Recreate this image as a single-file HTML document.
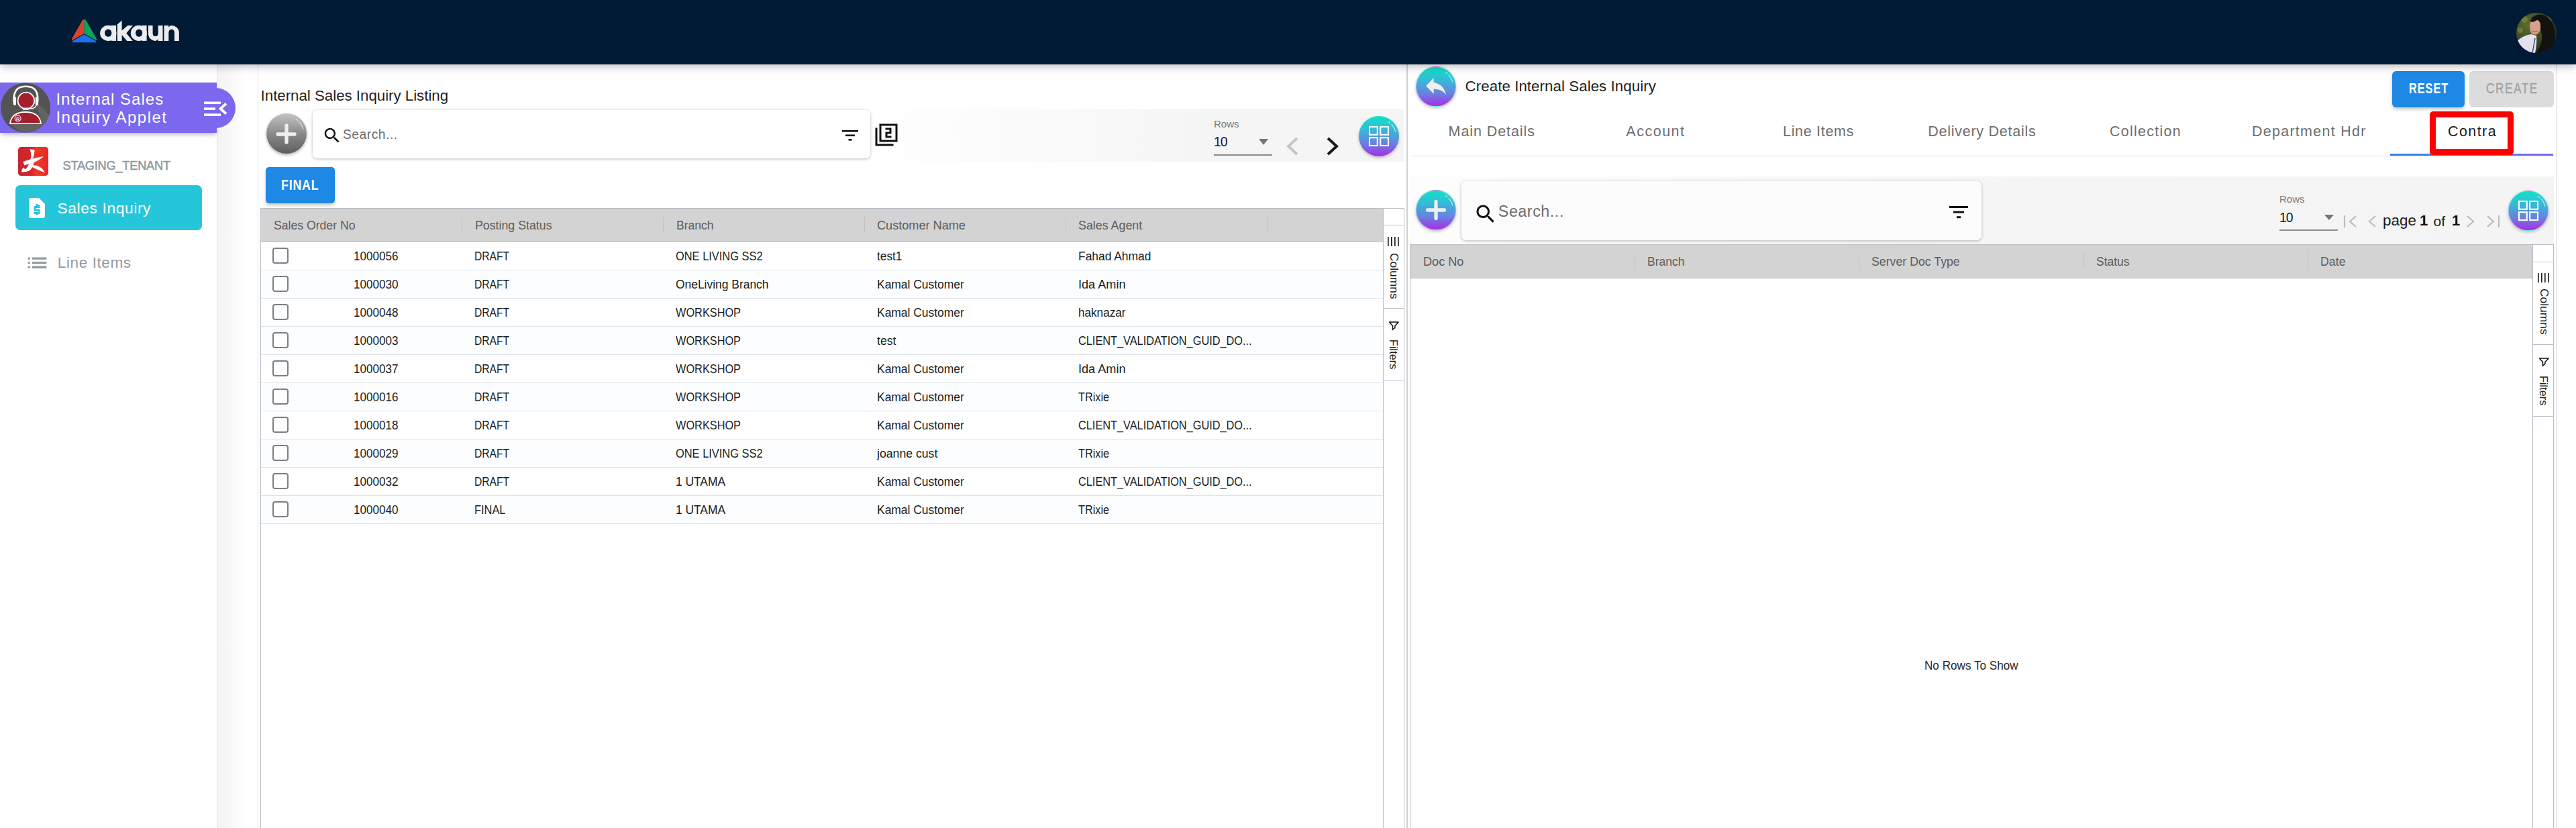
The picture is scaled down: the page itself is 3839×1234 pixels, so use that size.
<!DOCTYPE html>
<html><head><meta charset="utf-8">
<style>
*{box-sizing:border-box;margin:0;padding:0}
html,body{width:3839px;height:1234px;overflow:hidden;background:#fff;font-family:"Liberation Sans",sans-serif;position:relative}
.a{position:absolute}
.t{position:absolute;white-space:nowrap;line-height:1}
svg{position:absolute;overflow:visible}
</style></head><body>
<div class="a" style="left:0px;top:0px;width:3839px;height:96px;background:#011a36;z-index:5;box-shadow:0 2px 13px rgba(0,0,0,.3)"></div>
<svg style="left:104px;top:27px;z-index:6" width="42" height="38" viewBox="0 0 42 38">
<path d="M21.5 2.2 Q20 1.5 19 3 L3.2 30.5 Q2 33 4.2 32.8 L21.5 23 Z" fill="#d9432c"/>
<path d="M21.5 2.2 Q23 1.5 24 3 L39.8 30.5 Q41 33 38.8 32.8 L21.5 23 Z" fill="#0aa55c"/>
<path d="M21.5 24.2 L4.2 34 Q2.5 36.3 5.5 36.3 L37.5 36.3 Q40.5 36.3 38.8 34 Z" fill="#1a73e8"/>
</svg>
<svg style="left:0;top:0;z-index:6" width="300" height="96" viewBox="0 0 300 96">
<g fill="#ececec">
<ellipse cx="161.3" cy="49.4" rx="12.2" ry="11.6"/><rect x="165.9" y="37.9" width="7.1" height="23"/>
<path d="M174.8 60.9 V36.4 L181.3 30.8 H181.6 V45.5 L190.4 37.9 H197.9 L188.2 49.6 L197.7 60.9 H189.3 L181.6 52 V60.9 Z"/>
<ellipse cx="206.8" cy="49.4" rx="12" ry="11.6"/><rect x="211.5" y="37.9" width="7.1" height="23"/>
<path d="M221 37.9 H227.6 V50.2 A4.1 4.6 0 0 0 235.7 50.2 V37.9 H242.5 V60.9 H235.7 V58.2 Q233 60.9 231.7 60.9 A10.7 10.7 0 0 1 221 50.2 Z"/>
<path d="M244.5 60.9 V37.9 H251.3 V40.5 Q253 37.9 255.6 37.9 A11.1 10.6 0 0 1 266.8 48.5 V60.9 H260 V48.5 A4.3 4.8 0 0 0 251.3 48.5 V60.9 Z"/>
</g>
<g fill="#011a36">
<ellipse cx="161.2" cy="49.2" rx="5.2" ry="5.6"/>
<ellipse cx="207.1" cy="49.2" rx="5.1" ry="5.6"/>
</g>
</svg>
<svg style="left:3750px;top:19px;z-index:6" width="60" height="60" viewBox="0 0 60 60">
<defs><clipPath id="av"><circle cx="30" cy="30" r="30"/></clipPath>
<radialGradient id="fol" cx=".3" cy=".3" r=".7"><stop offset="0" stop-color="#5d6d32"/><stop offset=".6" stop-color="#3e4c22"/><stop offset="1" stop-color="#273219"/></radialGradient></defs>
<g clip-path="url(#av)">
<rect width="60" height="60" fill="url(#fol)"/>
<circle cx="12" cy="10" r="5" fill="#7d8c45" opacity=".7"/><circle cx="6" cy="26" r="4" fill="#7d8c45" opacity=".6"/><circle cx="50" cy="8" r="4" fill="#6f8a3c" opacity=".7"/>
<path d="M22 8 Q34 -2 46 6 Q58 16 58 36 Q58 52 50 60 H30 Q40 44 38 32 Q36 18 28 16 Z" fill="#141210"/>
<path d="M20 20 Q20 11 28 10 Q35 10 36 18 Q37 28 31 32 Q24 34 21 28 Z" fill="#d6a08a"/>
<path d="M24 27 Q28 30 32 27" stroke="#b05a5a" stroke-width="1.4" fill="none"/>
<path d="M20 12 Q26 6 34 9 Q30 12 24 14 Z" fill="#141210"/>
<path d="M0 44 Q8 34 22 32 L30 34 Q31 48 28 60 H0 Z" fill="#e6e0ee"/>
<path d="M24 60 L28 38" stroke="#3d4690" stroke-width="1.4"/>
</g></svg>
<div class="a" style="left:0px;top:96px;width:324px;height:1138px;background:#fff;border-right:1px solid #e2e2e2"></div>
<div class="a" style="left:324px;top:96px;width:60px;height:1138px;background:linear-gradient(90deg,#f3f3f3 0,#f8f8f8 20px,#fff 40px)"></div>
<div class="a" style="left:0px;top:123px;width:323px;height:75px;background:#7b68ee;box-shadow:0 5px 6px -2px rgba(0,0,0,.25)"></div>
<div class="a" style="left:291px;top:131px;width:60px;height:60px;border-radius:50%;background:#7b68ee"></div>
<svg style="left:1px;top:123px" width="75" height="75" viewBox="0 0 75 75">
<defs><clipPath id="sa"><circle cx="37" cy="37.5" r="37"/></clipPath></defs>
<g clip-path="url(#sa)">
<rect width="75" height="75" fill="#535353"/>
<path d="M52 28 L80 56 L80 80 L40 80 L14 62 L62 62 Z" fill="#626262"/>
</g>
<path d="M20.5 33 Q16 5.5 37.5 5.8 Q59 5.5 54.5 33" fill="none" stroke="#fff" stroke-width="2.6"/>
<rect x="18.8" y="21" width="4.2" height="13" rx="2" fill="#fff"/>
<rect x="51.8" y="21" width="4.2" height="13" rx="2" fill="#fff"/>
<circle cx="37.9" cy="27" r="13.2" fill="#fff"/><circle cx="37.9" cy="27" r="11.4" fill="#a51e2b"/>
<path d="M53.5 32 Q53 39.5 42 39.2" fill="none" stroke="#fff" stroke-width="1.6"/>
<rect x="32.8" y="37.6" width="9.7" height="3.2" rx="1.5" fill="#fff"/>
<path d="M13 62 Q15 43 37 43 Q59 43 61 62 Z" fill="#fff"/>
<path d="M15 60.5 Q17.5 45 37 45 Q56.5 45 59 60.5 Z" fill="#a51e2b"/>
<circle cx="25.6" cy="53.5" r="5" fill="#fff"/><circle cx="25.6" cy="53.5" r="3.9" fill="#a51e2b"/>
<text x="25.6" y="56.5" font-size="7.5" font-weight="bold" fill="#fff" text-anchor="middle" font-family="Liberation Sans">R</text>
</svg>
<div class="t" style="left:83.4px;top:135.8px;font-size:24px;color:#fff;letter-spacing:1.00px;">Internal Sales</div>
<div class="t" style="left:83.4px;top:162.8px;font-size:24px;color:#fff;letter-spacing:1.47px;">Inquiry Applet</div>
<svg style="left:304px;top:151px" width="34" height="23" viewBox="0 0 34 23">
<rect x="0" y="0.5" width="25" height="3.6" fill="#fff"/><rect x="0" y="9.3" width="17" height="3.6" fill="#fff"/><rect x="0" y="18.3" width="25" height="3.6" fill="#fff"/>
<path d="M33 3.5 L24.5 11 L33 18.5" stroke="#fff" stroke-width="3.8" fill="none"/>
</svg>
<svg style="left:27px;top:218.7px" width="45" height="43" viewBox="0 0 45 43">
<defs><linearGradient id="rl" x1="0" x2="1" y1="0" y2="0"><stop offset="0" stop-color="#c5272e"/><stop offset=".45" stop-color="#d8242a"/><stop offset=".6" stop-color="#ee3b24"/><stop offset="1" stop-color="#e8262a"/></linearGradient></defs>
<rect width="45" height="43" rx="4.5" fill="url(#rl)"/>
<g fill="#fff">
<path d="M17.3 3.6 Q22.5 2.8 24.8 5.6 Q23.6 10 23 15.5 L19.3 16.5 Q20 9.5 17.3 3.6 Z"/>
<path d="M7.6 22 Q20 17.2 38 14 Q31.5 20 23.5 23 Q14.5 25.5 9.3 27.6 Z"/>
<path d="M19.3 15 L25 19 Q22.5 29.5 18.3 34.3 Q13.5 38 5 37.3 Q5.3 32.8 7.6 30.6 Q9 33.2 11.3 32.7 Q16.2 28.8 19.3 15 Z"/>
<path d="M20.8 27.2 Q34.5 26.5 39.8 38.2 Q30 34.5 20.8 30 Z"/>
</g></svg>
<div class="t" style="left:93.5px;top:237.7px;font-size:18.2px;color:#8f9aa1;-webkit-text-stroke:.5px #8f9aa1;letter-spacing:-0.22px;">STAGING_TENANT</div>
<div class="a" style="left:23px;top:276px;width:278px;height:67px;border-radius:7px;background:#26c6da"></div>
<svg style="left:37px;top:292px" width="36" height="36" viewBox="0 0 24 24"><path fill="#fff" d="M14 2H6c-1.1 0-1.99.9-1.99 2L4 20c0 1.1.89 2 1.99 2H18c1.1 0 2-.9 2-2V8l-6-6zm1 10h-4v1h3c.55 0 1 .45 1 1v3c0 .55-.45 1-1 1h-1v1h-2v-1H9v-2h4v-1h-3c-.55 0-1-.45-1-1v-3c0-.55.45-1 1-1h1V8h2v1h2v2z"/></svg>
<div class="t" style="left:85.5px;top:298.9px;font-size:22.8px;color:#fff;letter-spacing:0.60px;">Sales Inquiry</div>
<svg style="left:37px;top:372px" width="37" height="39.4" viewBox="0 0 24 24" preserveAspectRatio="none"><path fill="#8f9aa1" d="M3 13h2v-2H3v2zm0 4h2v-2H3v2zm0-8h2V7H3v2zm4 4h14v-2H7v2zm0 4h14v-2H7v2zM7 7v2h14V7H7z"/></svg>
<div class="t" style="left:85.8px;top:380.6px;font-size:22.6px;color:#8f9aa1;letter-spacing:0.57px;">Line Items</div>
<div class="a" style="left:384px;top:96px;width:1px;height:1138px;background:#e3e3e3"></div>
<div class="t" style="left:388.6px;top:132.0px;font-size:22.3px;color:#1f1f1f;letter-spacing:-0.02px;">Internal Sales Inquiry Listing</div>
<div class="a" style="left:1300px;top:162px;width:793px;height:79px;background:linear-gradient(90deg,rgba(245,245,245,0) 0,#f5f5f5 500px,#f5f5f5 100%)"></div>
<div class="a" style="left:397px;top:169px;width:60px;height:60px;border-radius:50%;background:linear-gradient(180deg,#c4c4c4 0,#8a8a8a 50%,#5e5e5e 100%);box-shadow:0 2px 4px rgba(0,0,0,.3)"></div>
<svg style="left:411px;top:183.5px" width="32" height="32" viewBox="0 0 32 32"><path d="M16 3 V28 M3 16 H28" stroke="#eeeeee" stroke-width="5.3" stroke-linecap="round"/></svg>
<div class="a" style="left:466px;top:164px;width:831px;height:72px;border-radius:7px;background:#fff;box-shadow:0 1px 4px rgba(0,0,0,.28)"></div>
<svg style="left:480px;top:186.6px" width="30" height="30" viewBox="0 0 24 24"><path fill="#111" d="M15.5 14h-.79l-.28-.27C15.41 12.59 16 11.11 16 9.5 16 5.91 13.09 3 9.5 3S3 5.91 3 9.5 5.91 16 9.5 16c1.61 0 3.09-.59 4.23-1.57l.27.28v.79l5 4.99L20.49 19l-4.99-5zm-6 0C7.01 14 5 11.99 5 9.5S7.01 5 9.5 5 14 7.01 14 9.5 11.99 14 9.5 14z"/></svg>
<div class="t" style="left:510.9px;top:190.5px;font-size:19.3px;color:#6e6e6e;letter-spacing:0.51px;">Search...</div>
<svg style="left:1255px;top:194px" width="24" height="16" viewBox="0 0 24 16"><rect x="0" y="0" width="24" height="2.6" fill="#111"/><rect x="5" y="6.5" width="14" height="2.6" fill="#111"/><rect x="9.5" y="13" width="5" height="2.6" fill="#111"/></svg>
<svg style="left:1303px;top:183px" width="36" height="36" viewBox="0 0 24 24"><path fill="#111" d="M3 5H1v18h18v-2H3V5zm20-4H5v18h18V1zm-2 16H7V3h14v14zm-4-4h-4v-2h4V5h-6v2h4v2h-4v6h6v-2z"/></svg>
<div class="t" style="left:1809.0px;top:176.9px;font-size:15px;color:#7a7a7a;">Rows</div>
<div class="t" style="left:1809.0px;top:201.9px;font-size:19.5px;color:#1a1a1a;letter-spacing:-1px">10</div>
<div class="a" style="left:1809px;top:230px;width:87px;height:2px;background:#8c8c8c"></div>
<svg style="left:1876px;top:207px" width="14" height="9" viewBox="0 0 14 9"><path d="M0 0 H14 L7 9 Z" fill="#757575"/></svg>
<svg style="left:1914px;top:204px" width="22" height="28" viewBox="0 0 22 28"><path d="M19 2 L6 14 L19 26" stroke="#c6c6c6" stroke-width="4" fill="none"/></svg>
<svg style="left:1976px;top:204px" width="22" height="28" viewBox="0 0 22 28"><path d="M3 2 L16 14 L3 26" stroke="#1a1a1a" stroke-width="4" fill="none"/></svg>
<div class="a" style="left:2025px;top:173px;width:60px;height:60px;border-radius:50%;background:linear-gradient(180deg,#0fe3c8 0%,#3bb3d8 38%,#6a80e0 68%,#a82de6 100%);box-shadow:0 2px 4px rgba(0,0,0,.25)"></div>
<svg style="left:2040px;top:188px" width="30" height="30" viewBox="0 0 30 30"><g fill="none" stroke="#fff" stroke-width="2.1"><rect x="1" y="1" width="11.8" height="11.8"/><rect x="17.2" y="1" width="11.8" height="11.8"/><rect x="1" y="17.2" width="11.8" height="11.8"/><rect x="17.2" y="17.2" width="11.8" height="11.8"/></g></svg>
<div class="a" style="left:396px;top:249px;width:103px;height:54px;border-radius:5px;background:#1e88e5;box-shadow:0 3px 5px rgba(0,0,0,.22)"></div>
<div class="t" style="left:419.4px;top:266.2px;font-size:21.5px;color:#fff;letter-spacing:1.0px;transform-origin:0 0;transform:scaleX(0.8259);font-weight:bold;">FINAL</div>
<div class="a" style="left:388px;top:310px;width:1705px;height:924px;border:1px solid #babfc7;border-bottom:none"></div>
<div class="a" style="left:389px;top:311px;width:1672px;height:50px;background:#d3d3d3;border-bottom:1px solid #babfc7"></div>
<div class="t" style="left:407.6px;top:326.9px;font-size:18.4px;color:#5c5c5c;letter-spacing:0.0px;transform-origin:0 0;transform:scaleX(0.9584);">Sales Order No</div>
<div class="t" style="left:707.5px;top:326.9px;font-size:18.4px;color:#5c5c5c;letter-spacing:0.0px;transform-origin:0 0;transform:scaleX(0.9656);">Posting Status</div>
<div class="t" style="left:1007.5px;top:326.9px;font-size:18.4px;color:#5c5c5c;letter-spacing:0.0px;transform-origin:0 0;transform:scaleX(0.9532);">Branch</div>
<div class="t" style="left:1307.0px;top:326.9px;font-size:18.4px;color:#5c5c5c;letter-spacing:0.0px;transform-origin:0 0;transform:scaleX(0.9854);">Customer Name</div>
<div class="t" style="left:1607.0px;top:326.9px;font-size:18.4px;color:#5c5c5c;letter-spacing:0.0px;transform-origin:0 0;transform:scaleX(0.9699);">Sales Agent</div>
<div class="a" style="left:688px;top:323px;width:1px;height:24px;background:#c2c2c2"></div>
<div class="a" style="left:988px;top:323px;width:1px;height:24px;background:#c2c2c2"></div>
<div class="a" style="left:1288px;top:323px;width:1px;height:24px;background:#c2c2c2"></div>
<div class="a" style="left:1588px;top:323px;width:1px;height:24px;background:#c2c2c2"></div>
<div class="a" style="left:1888px;top:323px;width:1px;height:24px;background:#c2c2c2"></div>
<div class="a" style="left:389px;top:361px;width:1672px;height:42px;background:#fff;border-bottom:1px solid #dde2eb"></div>
<div class="a" style="left:406px;top:369px;width:24px;height:24px;border:2px solid #7a8086;border-radius:4px;background:#fff"></div>
<div class="t" style="left:527.0px;top:373.3px;font-size:18px;color:#181d1f;letter-spacing:0.0px;transform-origin:0 0;transform:scaleX(0.9485);">1000056</div>
<div class="t" style="left:707.2px;top:373.3px;font-size:18px;color:#181d1f;letter-spacing:0.0px;transform-origin:0 0;transform:scaleX(0.8696);">DRAFT</div>
<div class="t" style="left:1006.7px;top:373.3px;font-size:18px;color:#181d1f;letter-spacing:0.0px;transform-origin:0 0;transform:scaleX(0.9118);">ONE LIVING SS2</div>
<div class="t" style="left:1307.0px;top:373.3px;font-size:18px;color:#181d1f;letter-spacing:0.0px;transform-origin:0 0;transform:scaleX(0.9601);">test1</div>
<div class="t" style="left:1607.0px;top:373.3px;font-size:18px;color:#181d1f;letter-spacing:0.0px;transform-origin:0 0;transform:scaleX(0.9674);">Fahad Ahmad</div>
<div class="a" style="left:389px;top:403px;width:1672px;height:42px;background:#fcfdfe;border-bottom:1px solid #dde2eb"></div>
<div class="a" style="left:406px;top:411px;width:24px;height:24px;border:2px solid #7a8086;border-radius:4px;background:#fff"></div>
<div class="t" style="left:527.0px;top:415.3px;font-size:18px;color:#181d1f;letter-spacing:0.0px;transform-origin:0 0;transform:scaleX(0.9485);">1000030</div>
<div class="t" style="left:707.2px;top:415.3px;font-size:18px;color:#181d1f;letter-spacing:0.0px;transform-origin:0 0;transform:scaleX(0.8696);">DRAFT</div>
<div class="t" style="left:1006.7px;top:415.3px;font-size:18px;color:#181d1f;letter-spacing:0.0px;transform-origin:0 0;transform:scaleX(0.9679);">OneLiving Branch</div>
<div class="t" style="left:1307.0px;top:415.3px;font-size:18px;color:#181d1f;letter-spacing:0.0px;transform-origin:0 0;transform:scaleX(0.9686);">Kamal Customer</div>
<div class="t" style="left:1607.0px;top:415.3px;font-size:18px;color:#181d1f;letter-spacing:0.0px;transform-origin:0 0;transform:scaleX(1.0069);">Ida Amin</div>
<div class="a" style="left:389px;top:445px;width:1672px;height:42px;background:#fff;border-bottom:1px solid #dde2eb"></div>
<div class="a" style="left:406px;top:453px;width:24px;height:24px;border:2px solid #7a8086;border-radius:4px;background:#fff"></div>
<div class="t" style="left:527.0px;top:457.3px;font-size:18px;color:#181d1f;letter-spacing:0.0px;transform-origin:0 0;transform:scaleX(0.9485);">1000048</div>
<div class="t" style="left:707.2px;top:457.3px;font-size:18px;color:#181d1f;letter-spacing:0.0px;transform-origin:0 0;transform:scaleX(0.8696);">DRAFT</div>
<div class="t" style="left:1006.7px;top:457.3px;font-size:18px;color:#181d1f;letter-spacing:0.0px;transform-origin:0 0;transform:scaleX(0.9065);">WORKSHOP</div>
<div class="t" style="left:1307.0px;top:457.3px;font-size:18px;color:#181d1f;letter-spacing:0.0px;transform-origin:0 0;transform:scaleX(0.9686);">Kamal Customer</div>
<div class="t" style="left:1607.0px;top:457.3px;font-size:18px;color:#181d1f;letter-spacing:0.0px;transform-origin:0 0;transform:scaleX(0.9518);">haknazar</div>
<div class="a" style="left:389px;top:487px;width:1672px;height:42px;background:#fcfdfe;border-bottom:1px solid #dde2eb"></div>
<div class="a" style="left:406px;top:495px;width:24px;height:24px;border:2px solid #7a8086;border-radius:4px;background:#fff"></div>
<div class="t" style="left:527.0px;top:499.3px;font-size:18px;color:#181d1f;letter-spacing:0.0px;transform-origin:0 0;transform:scaleX(0.9485);">1000003</div>
<div class="t" style="left:707.2px;top:499.3px;font-size:18px;color:#181d1f;letter-spacing:0.0px;transform-origin:0 0;transform:scaleX(0.8696);">DRAFT</div>
<div class="t" style="left:1006.7px;top:499.3px;font-size:18px;color:#181d1f;letter-spacing:0.0px;transform-origin:0 0;transform:scaleX(0.9065);">WORKSHOP</div>
<div class="t" style="left:1307.0px;top:499.3px;font-size:18px;color:#181d1f;letter-spacing:0.0px;transform-origin:0 0;transform:scaleX(0.9834);">test</div>
<div class="t" style="left:1607.0px;top:499.3px;font-size:18px;color:#181d1f;letter-spacing:0.0px;transform-origin:0 0;transform:scaleX(0.9061);">CLIENT_VALIDATION_GUID_DO...</div>
<div class="a" style="left:389px;top:529px;width:1672px;height:42px;background:#fff;border-bottom:1px solid #dde2eb"></div>
<div class="a" style="left:406px;top:537px;width:24px;height:24px;border:2px solid #7a8086;border-radius:4px;background:#fff"></div>
<div class="t" style="left:527.0px;top:541.3px;font-size:18px;color:#181d1f;letter-spacing:0.0px;transform-origin:0 0;transform:scaleX(0.9485);">1000037</div>
<div class="t" style="left:707.2px;top:541.3px;font-size:18px;color:#181d1f;letter-spacing:0.0px;transform-origin:0 0;transform:scaleX(0.8696);">DRAFT</div>
<div class="t" style="left:1006.7px;top:541.3px;font-size:18px;color:#181d1f;letter-spacing:0.0px;transform-origin:0 0;transform:scaleX(0.9065);">WORKSHOP</div>
<div class="t" style="left:1307.0px;top:541.3px;font-size:18px;color:#181d1f;letter-spacing:0.0px;transform-origin:0 0;transform:scaleX(0.9686);">Kamal Customer</div>
<div class="t" style="left:1607.0px;top:541.3px;font-size:18px;color:#181d1f;letter-spacing:0.0px;transform-origin:0 0;transform:scaleX(1.0069);">Ida Amin</div>
<div class="a" style="left:389px;top:571px;width:1672px;height:42px;background:#fcfdfe;border-bottom:1px solid #dde2eb"></div>
<div class="a" style="left:406px;top:579px;width:24px;height:24px;border:2px solid #7a8086;border-radius:4px;background:#fff"></div>
<div class="t" style="left:527.0px;top:583.3px;font-size:18px;color:#181d1f;letter-spacing:0.0px;transform-origin:0 0;transform:scaleX(0.9485);">1000016</div>
<div class="t" style="left:707.2px;top:583.3px;font-size:18px;color:#181d1f;letter-spacing:0.0px;transform-origin:0 0;transform:scaleX(0.8696);">DRAFT</div>
<div class="t" style="left:1006.7px;top:583.3px;font-size:18px;color:#181d1f;letter-spacing:0.0px;transform-origin:0 0;transform:scaleX(0.9065);">WORKSHOP</div>
<div class="t" style="left:1307.0px;top:583.3px;font-size:18px;color:#181d1f;letter-spacing:0.0px;transform-origin:0 0;transform:scaleX(0.9686);">Kamal Customer</div>
<div class="t" style="left:1607.0px;top:583.3px;font-size:18px;color:#181d1f;letter-spacing:0.0px;transform-origin:0 0;transform:scaleX(0.9034);">TRixie</div>
<div class="a" style="left:389px;top:613px;width:1672px;height:42px;background:#fff;border-bottom:1px solid #dde2eb"></div>
<div class="a" style="left:406px;top:621px;width:24px;height:24px;border:2px solid #7a8086;border-radius:4px;background:#fff"></div>
<div class="t" style="left:527.0px;top:625.3px;font-size:18px;color:#181d1f;letter-spacing:0.0px;transform-origin:0 0;transform:scaleX(0.9485);">1000018</div>
<div class="t" style="left:707.2px;top:625.3px;font-size:18px;color:#181d1f;letter-spacing:0.0px;transform-origin:0 0;transform:scaleX(0.8696);">DRAFT</div>
<div class="t" style="left:1006.7px;top:625.3px;font-size:18px;color:#181d1f;letter-spacing:0.0px;transform-origin:0 0;transform:scaleX(0.9065);">WORKSHOP</div>
<div class="t" style="left:1307.0px;top:625.3px;font-size:18px;color:#181d1f;letter-spacing:0.0px;transform-origin:0 0;transform:scaleX(0.9686);">Kamal Customer</div>
<div class="t" style="left:1607.0px;top:625.3px;font-size:18px;color:#181d1f;letter-spacing:0.0px;transform-origin:0 0;transform:scaleX(0.9061);">CLIENT_VALIDATION_GUID_DO...</div>
<div class="a" style="left:389px;top:655px;width:1672px;height:42px;background:#fcfdfe;border-bottom:1px solid #dde2eb"></div>
<div class="a" style="left:406px;top:663px;width:24px;height:24px;border:2px solid #7a8086;border-radius:4px;background:#fff"></div>
<div class="t" style="left:527.0px;top:667.3px;font-size:18px;color:#181d1f;letter-spacing:0.0px;transform-origin:0 0;transform:scaleX(0.9485);">1000029</div>
<div class="t" style="left:707.2px;top:667.3px;font-size:18px;color:#181d1f;letter-spacing:0.0px;transform-origin:0 0;transform:scaleX(0.8696);">DRAFT</div>
<div class="t" style="left:1006.7px;top:667.3px;font-size:18px;color:#181d1f;letter-spacing:0.0px;transform-origin:0 0;transform:scaleX(0.9118);">ONE LIVING SS2</div>
<div class="t" style="left:1307.4px;top:667.3px;font-size:18px;color:#181d1f;letter-spacing:0.0px;transform-origin:0 0;transform:scaleX(0.9814);">joanne cust</div>
<div class="t" style="left:1607.0px;top:667.3px;font-size:18px;color:#181d1f;letter-spacing:0.0px;transform-origin:0 0;transform:scaleX(0.9034);">TRixie</div>
<div class="a" style="left:389px;top:697px;width:1672px;height:42px;background:#fff;border-bottom:1px solid #dde2eb"></div>
<div class="a" style="left:406px;top:705px;width:24px;height:24px;border:2px solid #7a8086;border-radius:4px;background:#fff"></div>
<div class="t" style="left:527.0px;top:709.3px;font-size:18px;color:#181d1f;letter-spacing:0.0px;transform-origin:0 0;transform:scaleX(0.9485);">1000032</div>
<div class="t" style="left:707.2px;top:709.3px;font-size:18px;color:#181d1f;letter-spacing:0.0px;transform-origin:0 0;transform:scaleX(0.8696);">DRAFT</div>
<div class="t" style="left:1006.7px;top:709.3px;font-size:18px;color:#181d1f;letter-spacing:0.0px;transform-origin:0 0;transform:scaleX(0.9652);">1 UTAMA</div>
<div class="t" style="left:1307.0px;top:709.3px;font-size:18px;color:#181d1f;letter-spacing:0.0px;transform-origin:0 0;transform:scaleX(0.9686);">Kamal Customer</div>
<div class="t" style="left:1607.0px;top:709.3px;font-size:18px;color:#181d1f;letter-spacing:0.0px;transform-origin:0 0;transform:scaleX(0.9061);">CLIENT_VALIDATION_GUID_DO...</div>
<div class="a" style="left:389px;top:739px;width:1672px;height:42px;background:#fcfdfe;border-bottom:1px solid #dde2eb"></div>
<div class="a" style="left:406px;top:747px;width:24px;height:24px;border:2px solid #7a8086;border-radius:4px;background:#fff"></div>
<div class="t" style="left:527.0px;top:751.3px;font-size:18px;color:#181d1f;letter-spacing:0.0px;transform-origin:0 0;transform:scaleX(0.9485);">1000040</div>
<div class="t" style="left:707.2px;top:751.3px;font-size:18px;color:#181d1f;letter-spacing:0.0px;transform-origin:0 0;transform:scaleX(0.9112);">FINAL</div>
<div class="t" style="left:1006.7px;top:751.3px;font-size:18px;color:#181d1f;letter-spacing:0.0px;transform-origin:0 0;transform:scaleX(0.9652);">1 UTAMA</div>
<div class="t" style="left:1307.0px;top:751.3px;font-size:18px;color:#181d1f;letter-spacing:0.0px;transform-origin:0 0;transform:scaleX(0.9686);">Kamal Customer</div>
<div class="t" style="left:1607.0px;top:751.3px;font-size:18px;color:#181d1f;letter-spacing:0.0px;transform-origin:0 0;transform:scaleX(0.9034);">TRixie</div>
<div class="a" style="left:2061px;top:310px;width:1px;height:924px;background:#babfc7"></div>
<div class="a" style="left:2062px;top:335px;width:30px;height:1px;background:#babfc7"></div>
<div class="a" style="left:2062px;top:459px;width:30px;height:1px;background:#babfc7"></div>
<div class="a" style="left:2062px;top:566px;width:30px;height:1px;background:#babfc7"></div>
<svg style="left:2068px;top:353px" width="17" height="14" viewBox="0 0 17 14"><g fill="#222"><rect x="0" y="0" width="1.7" height="14"/><rect x="5" y="0" width="1.7" height="14"/><rect x="10" y="0" width="1.7" height="14"/><rect x="15" y="0" width="1.7" height="14"/></g></svg>
<div class="t" style="left:2085.5px;top:376.5px;font-size:17.4px;color:#222;transform-origin:0 0;transform:rotate(90deg)">Columns</div>
<svg style="left:2069.7px;top:479.4px" width="15" height="14" viewBox="0 0 15 14"><path d="M0.9 0.9 H13.7 V1.6 L8.9 6.6 V9.5 L5.5 12.2 V6.6 L0.9 1.6 Z" fill="none" stroke="#111" stroke-width="1.5" stroke-linejoin="miter"/></svg>
<div class="t" style="left:2085px;top:506px;font-size:16.3px;color:#222;transform-origin:0 0;transform:rotate(90deg)">Filters</div>
<div class="a" style="left:2096px;top:96px;width:2px;height:1138px;background:#d0d0d0"></div>
<div class="a" style="left:2110px;top:99px;width:60px;height:60px;border-radius:50%;background:linear-gradient(180deg,#0fe3c8 0%,#3bb3d8 38%,#6a80e0 68%,#a82de6 100%);border:1px solid rgba(255,255,255,.3);box-shadow:0 2px 4px rgba(0,0,0,.25)"></div>
<svg style="left:2120px;top:108px" width="40" height="40" viewBox="0 0 24 24"><path fill="#efefef" d="M10 9V5l-7 7 7 7v-4.1c5 0 8.5 1.6 11 5.1-1-5-4-10-11-11z"/></svg>
<div class="t" style="left:2183.6px;top:117.6px;font-size:22.3px;color:#1f1f1f;letter-spacing:0.06px;">Create Internal Sales Inquiry</div>
<div class="a" style="left:3565px;top:106px;width:108px;height:54px;border-radius:6px;background:#1e88e5;box-shadow:0 3px 5px rgba(0,0,0,.22)"></div>
<div class="t" style="left:3589.6px;top:122.0px;font-size:21.5px;color:#fff;letter-spacing:1.2px;transform-origin:0 0;transform:scaleX(0.7621);font-weight:bold;">RESET</div>
<div class="a" style="left:3680px;top:106px;width:126px;height:54px;border-radius:6px;background:#dcdcdc"></div>
<div class="t" style="left:3704.7px;top:122.0px;font-size:21.5px;color:#a2a2a2;-webkit-text-stroke:.35px #a2a2a2;letter-spacing:1.8px;transform-origin:0 0;transform:scaleX(0.8058);">CREATE</div>
<div class="t" style="left:2158.6px;top:186.1px;font-size:21.5px;color:#6e6e6e;letter-spacing:0.92px;">Main Details</div>
<div class="t" style="left:2423.3px;top:186.1px;font-size:21.5px;color:#6e6e6e;letter-spacing:1.51px;">Account</div>
<div class="t" style="left:2657.0px;top:186.1px;font-size:21.5px;color:#6e6e6e;letter-spacing:0.69px;">Line Items</div>
<div class="t" style="left:2873.2px;top:186.1px;font-size:21.5px;color:#6e6e6e;letter-spacing:0.75px;">Delivery Details</div>
<div class="t" style="left:3144.0px;top:186.1px;font-size:21.5px;color:#6e6e6e;letter-spacing:1.26px;">Collection</div>
<div class="t" style="left:3356.0px;top:186.1px;font-size:21.5px;color:#6e6e6e;letter-spacing:1.26px;">Department Hdr</div>
<div class="t" style="left:3648.0px;top:186.1px;font-size:21.5px;color:#1a1a1a;letter-spacing:1.42px;">Contra</div>
<div class="a" style="left:2101px;top:232px;width:1705px;height:1px;background:#e0e0e0"></div>
<div class="a" style="left:3562px;top:229px;width:243px;height:3px;background:linear-gradient(90deg,#2f86e6,#7b68ee)"></div>
<div class="a" style="left:3621px;top:166px;width:125px;height:65px;border:9px solid #f00;border-radius:5px"></div>
<div class="a" style="left:2101px;top:263px;width:1705px;height:101px;background:linear-gradient(90deg,#fdfdfd 0,#f5f5f5 900px,#f4f4f4 100%)"></div>
<div class="a" style="left:2110px;top:283px;width:60px;height:60px;border-radius:50%;background:linear-gradient(180deg,#0fe3c8 0%,#3bb3d8 38%,#6a80e0 68%,#a82de6 100%);border:1px solid rgba(255,255,255,.3);box-shadow:0 2px 4px rgba(0,0,0,.25)"></div>
<svg style="left:2124px;top:297px" width="32" height="32" viewBox="0 0 32 32"><path d="M16 3.5 V28.5 M3.5 16 H28.5" stroke="#eeeeee" stroke-width="5.3" stroke-linecap="round"/></svg>
<div class="a" style="left:2178px;top:270px;width:775px;height:88px;border-radius:7px;background:#fcfcfc;box-shadow:0 1px 4px rgba(0,0,0,.28)"></div>
<svg style="left:2195.5px;top:300.6px" width="36" height="36" viewBox="0 0 24 24"><path fill="#111" d="M15.5 14h-.79l-.28-.27C15.41 12.59 16 11.11 16 9.5 16 5.91 13.09 3 9.5 3S3 5.91 3 9.5 5.91 16 9.5 16c1.61 0 3.09-.59 4.23-1.57l.27.28v.79l5 4.99L20.49 19l-4.99-5zm-6 0C7.01 14 5 11.99 5 9.5S7.01 5 9.5 5 14 7.01 14 9.5 11.99 14 9.5 14z"/></svg>
<div class="t" style="left:2232.8px;top:304.3px;font-size:23.3px;color:#6e6e6e;letter-spacing:0.54px;">Search...</div>
<svg style="left:2905px;top:307px" width="28" height="19" viewBox="0 0 28 19"><rect x="0" y="0" width="28" height="3" fill="#111"/><rect x="6" y="7.6" width="16" height="3" fill="#111"/><rect x="11" y="15.2" width="6" height="3" fill="#111"/></svg>
<div class="t" style="left:3397.0px;top:289.3px;font-size:15px;color:#7a7a7a;">Rows</div>
<div class="t" style="left:3397.0px;top:314.5px;font-size:19.5px;color:#1a1a1a;letter-spacing:-1px">10</div>
<div class="a" style="left:3397px;top:342px;width:87px;height:2px;background:#8c8c8c"></div>
<svg style="left:3464px;top:320px" width="14" height="8" viewBox="0 0 14 8"><path d="M0 0 H14 L7 8 Z" fill="#757575"/></svg>
<svg style="left:3492px;top:320px" width="22" height="20" viewBox="0 0 22 20"><path d="M2 1 V19" stroke="#bcbcbc" stroke-width="2.2"/><path d="M19 2 L10 10 L19 18" stroke="#bcbcbc" stroke-width="2.2" fill="none"/></svg>
<svg style="left:3528px;top:320px" width="14" height="20" viewBox="0 0 14 20"><path d="M12 2 L3 10 L12 18" stroke="#bcbcbc" stroke-width="2.2" fill="none"/></svg>
<div class="t" style="left:3551.0px;top:318.0px;font-size:22.5px;color:#1a1a1a;">page</div>
<div class="t" style="left:3606.0px;top:318.4px;font-size:22px;color:#111;font-weight:bold">1</div>
<div class="t" style="left:3626.6px;top:319.2px;font-size:21px;color:#1a1a1a;">of</div>
<div class="t" style="left:3654.0px;top:318.4px;font-size:22px;color:#111;font-weight:bold">1</div>
<svg style="left:3675px;top:320px" width="14" height="20" viewBox="0 0 14 20"><path d="M2 2 L11 10 L2 18" stroke="#bcbcbc" stroke-width="2.2" fill="none"/></svg>
<svg style="left:3704px;top:320px" width="22" height="20" viewBox="0 0 22 20"><path d="M3 2 L12 10 L3 18" stroke="#bcbcbc" stroke-width="2.2" fill="none"/><path d="M20 1 V19" stroke="#bcbcbc" stroke-width="2.2"/></svg>
<div class="a" style="left:3738px;top:284px;width:60px;height:60px;border-radius:50%;background:linear-gradient(180deg,#0fe3c8 0%,#3bb3d8 38%,#6a80e0 68%,#a82de6 100%);border:1px solid rgba(255,255,255,.3);box-shadow:0 2px 4px rgba(0,0,0,.25)"></div>
<svg style="left:3753px;top:299px" width="30" height="30" viewBox="0 0 30 30"><g fill="none" stroke="#fff" stroke-width="2.1"><rect x="1" y="1" width="11.8" height="11.8"/><rect x="17.2" y="1" width="11.8" height="11.8"/><rect x="1" y="17.2" width="11.8" height="11.8"/><rect x="17.2" y="17.2" width="11.8" height="11.8"/></g></svg>
<div class="a" style="left:2101px;top:364px;width:1705px;height:870px;border:1px solid #babfc7;border-bottom:none"></div>
<div class="a" style="left:2102px;top:365px;width:1672px;height:50px;background:#d3d3d3;border-bottom:1px solid #babfc7"></div>
<div class="t" style="left:2120.7px;top:380.6px;font-size:18.4px;color:#5c5c5c;letter-spacing:0.0px;transform-origin:0 0;transform:scaleX(0.9859);">Doc No</div>
<div class="t" style="left:2455.4px;top:380.6px;font-size:18.4px;color:#5c5c5c;letter-spacing:0.0px;transform-origin:0 0;transform:scaleX(0.9532);">Branch</div>
<div class="t" style="left:2789.3px;top:380.6px;font-size:18.4px;color:#5c5c5c;letter-spacing:0.0px;transform-origin:0 0;transform:scaleX(0.9641);">Server Doc Type</div>
<div class="t" style="left:3123.6px;top:380.6px;font-size:18.4px;color:#5c5c5c;letter-spacing:0.0px;transform-origin:0 0;transform:scaleX(0.9489);">Status</div>
<div class="t" style="left:3458.3px;top:380.6px;font-size:18.4px;color:#5c5c5c;letter-spacing:0.0px;transform-origin:0 0;transform:scaleX(0.9685);">Date</div>
<div class="a" style="left:2436px;top:377px;width:1px;height:24px;background:#c2c2c2"></div>
<div class="a" style="left:2770px;top:377px;width:1px;height:24px;background:#c2c2c2"></div>
<div class="a" style="left:3105px;top:377px;width:1px;height:24px;background:#c2c2c2"></div>
<div class="a" style="left:3439px;top:377px;width:1px;height:24px;background:#c2c2c2"></div>
<div class="a" style="left:3774px;top:364px;width:1px;height:870px;background:#babfc7"></div>
<div class="a" style="left:3775px;top:390px;width:30px;height:1px;background:#babfc7"></div>
<div class="a" style="left:3775px;top:513px;width:30px;height:1px;background:#babfc7"></div>
<div class="a" style="left:3775px;top:620px;width:30px;height:1px;background:#babfc7"></div>
<svg style="left:3782px;top:407px" width="17" height="14" viewBox="0 0 17 14"><g fill="#222"><rect x="0" y="0" width="1.7" height="14"/><rect x="5" y="0" width="1.7" height="14"/><rect x="10" y="0" width="1.7" height="14"/><rect x="15" y="0" width="1.7" height="14"/></g></svg>
<div class="t" style="left:3799.5px;top:429.5px;font-size:17.4px;color:#222;transform-origin:0 0;transform:rotate(90deg)">Columns</div>
<svg style="left:3783.7px;top:533.4px" width="15" height="14" viewBox="0 0 15 14"><path d="M0.9 0.9 H13.7 V1.6 L8.9 6.6 V9.5 L5.5 12.2 V6.6 L0.9 1.6 Z" fill="none" stroke="#111" stroke-width="1.5" stroke-linejoin="miter"/></svg>
<div class="t" style="left:3799px;top:560px;font-size:16.3px;color:#222;transform-origin:0 0;transform:rotate(90deg)">Filters</div>
<div class="t" style="left:2868.3px;top:983.7px;font-size:17.8px;color:#2a2a2a;letter-spacing:0.0px;transform-origin:0 0;transform:scaleX(0.9631);">No Rows To Show</div>
<div class="a" style="left:3809px;top:96px;width:1px;height:1138px;background:#dcdcdc"></div>
<svg style="left:0;top:0" width="3839" height="1234"><path d="M441.1 177.4 A25.8 25.8 0 0 1 452.0 192.8" fill="none" stroke="rgba(255,255,255,.55)" stroke-width="1.6" stroke-dasharray="4 2 30"/><path d="M2069.1 181.4 A25.8 25.8 0 0 1 2080.0 196.8" fill="none" stroke="rgba(255,255,255,.55)" stroke-width="1.6" stroke-dasharray="4 2 30"/><path d="M2154.1 107.4 A25.8 25.8 0 0 1 2165.0 122.8" fill="none" stroke="rgba(255,255,255,.55)" stroke-width="1.6" stroke-dasharray="4 2 30"/><path d="M2154.1 291.4 A25.8 25.8 0 0 1 2165.0 306.8" fill="none" stroke="rgba(255,255,255,.55)" stroke-width="1.6" stroke-dasharray="4 2 30"/><path d="M3782.1 292.4 A25.8 25.8 0 0 1 3793.0 307.8" fill="none" stroke="rgba(255,255,255,.55)" stroke-width="1.6" stroke-dasharray="4 2 30"/></svg>
</body></html>
